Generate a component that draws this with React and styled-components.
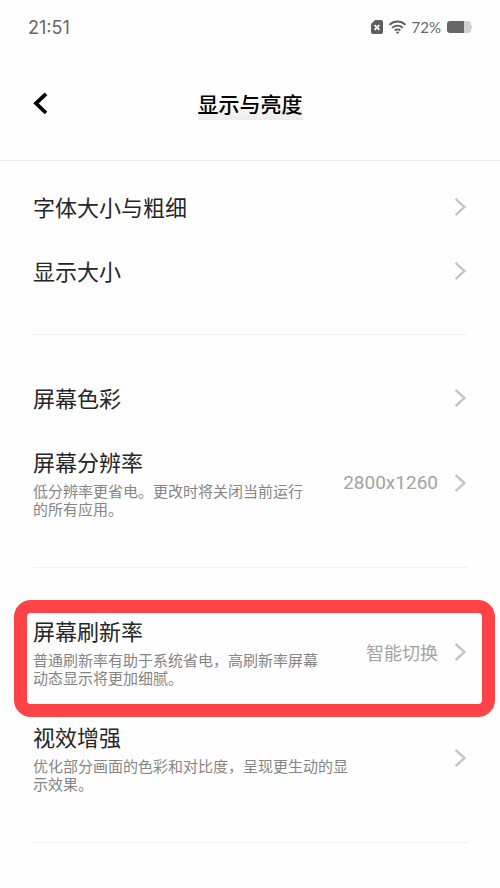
import React from 'react';
import styled, { createGlobalStyle } from 'styled-components';

const GlobalStyle = createGlobalStyle`
  * {
    box-sizing: border-box;
  }

  body {
    margin: 0;
    background: #fefefe;
    color: #262626;
    font-family: "Noto Sans CJK SC", sans-serif;
  }

  button {
    margin: 0;
    border: 0;
    padding: 0;
    background: none;
    color: inherit;
    font: inherit;
    text-align: left;
    cursor: pointer;
  }
`;

const StatusBar = styled.div`
  display: flex;
  align-items: center;
  justify-content: space-between;
  height: 54px;
  padding: 0 28px;
  color: #666;
  font-family: Inter, sans-serif;
`;

const Clock = styled.time`
  font-size: 18px;
`;

const StatusIcons = styled.div`
  display: flex;
  align-items: center;
  gap: 6px;

  svg {
    display: block;
  }
`;

const BatteryLevel = styled.span`
  font-family: Lato, sans-serif;
  font-size: 15px;
`;

const Header = styled.header`
  display: grid;
  grid-template-columns: 1fr auto 1fr;
  align-items: center;
  padding: 34px 33px 40px;
  border-bottom: 1px solid #ededed;
`;

const BackButton = styled.button`
  display: flex;
  align-items: center;
  width: 32px;
  height: 32px;
`;

const Title = styled.h1`
  margin: 0;
  padding-bottom: 2px;
  background: linear-gradient(#fefefe 30%, #ececec);
  color: #000;
  font-size: 21px;
  font-weight: 500;
  line-height: 30px;
`;

const Content = styled.main`
  padding: 0 33px;
`;

const Group = styled.section`
  padding: 32px 0 30px;
  border-bottom: 1px solid #f1f1f1;

  &:first-child {
    padding-top: 15px;
  }
`;

const Row = styled.button`
  position: relative;
  display: flex;
  align-items: center;
  width: 100%;
  padding: 15px 0 17px;

  svg {
    flex: none;
    margin-left: 15px;
  }
`;

const RowText = styled.span`
  flex: 1;
  padding-bottom: 2px;
`;

const RowTitle = styled.span`
  display: block;
  font-size: 22px;
  line-height: 30px;
`;

const RowDescription = styled.span`
  display: block;
  max-width: 324px;
  margin-top: 6px;
  color: #858585;
  font-size: 15px;
  line-height: 18px;
`;

const RowValue = styled.span`
  margin-left: 36px;
  color: #a3a3a3;
  font-family: ${({ $numeric }) => ($numeric ? 'Roboto, sans-serif' : 'inherit')};
  font-size: ${({ $numeric }) => ($numeric ? '19px' : '18px')};
  line-height: 24px;
`;

// red frame lying over the row and the page margins
const Highlight = styled.span`
  position: absolute;
  top: 0;
  right: -28px;
  bottom: -11px;
  left: -19px;
  border: 13px solid #fd4345;
  border-radius: 17px;
  pointer-events: none;
`;

const groups = [
  [{ title: '字体大小与粗细' }, { title: '显示大小' }],
  [
    { title: '屏幕色彩' },
    {
      title: '屏幕分辨率',
      description: '低分辨率更省电。更改时将关闭当前运行的所有应用。',
      value: '2800x1260',
      numeric: true,
    },
  ],
  [
    {
      title: '屏幕刷新率',
      description: '普通刷新率有助于系统省电，高刷新率屏幕动态显示将更加细腻。',
      value: '智能切换',
      highlighted: true,
    },
    {
      title: '视效增强',
      description: '优化部分画面的色彩和对比度，呈现更生动的显示效果。',
    },
  ],
];

function SimIcon() {
  return (
    <svg width="12" height="14" viewBox="0 0 12 14" aria-hidden="true">
      <path d="M4 0h6a2 2 0 0 1 2 2v10a2 2 0 0 1-2 2H2a2 2 0 0 1-2-2V4z" fill="#5f5f5f" />
      <path d="M3.6 5.1l4.8 4.8M8.4 5.1L3.6 9.9" stroke="#fff" strokeWidth="1.7" />
    </svg>
  );
}

function WifiIcon() {
  return (
    <svg width="17" height="14" viewBox="0 0 17 14" aria-hidden="true">
      <g fill="none" stroke="#5f5f5f" strokeWidth="1.9">
        <path d="M0.6 4.8a11.2 11.2 0 0 1 15.8 0" />
        <path d="M3.2 7.8a7.5 7.5 0 0 1 10.6 0" />
        <path d="M5.7 10.5a4 4 0 0 1 5.6 0" />
      </g>
      <path d="M8.5 14l-1.7-1.8a2.5 2.5 0 0 1 3.4 0z" fill="#5f5f5f" />
    </svg>
  );
}

function BatteryIcon() {
  return (
    <svg width="25" height="12" viewBox="0 0 25 12" aria-hidden="true">
      <path d="M17 0h4a3 3 0 0 1 3 3v.8c1.3.8 1.3 3.6 0 4.4V9a3 3 0 0 1-3 3h-4z" fill="#cfcfcf" />
      <path d="M3 0h14v12H3a3 3 0 0 1-3-3V3a3 3 0 0 1 3-3z" fill="#666" />
    </svg>
  );
}

function BackIcon() {
  return (
    <svg width="15" height="24" viewBox="0 0 15 24" aria-hidden="true">
      <path d="M13 1.8L3 11.3l10 9.7" fill="none" stroke="#000" strokeWidth="3.8" />
    </svg>
  );
}

function ChevronIcon() {
  return (
    <svg width="14" height="20" viewBox="0 0 14 20" aria-hidden="true">
      <path d="M2.6 1.8L11.4 10l-8.8 8.2" fill="none" stroke="#c6c6c6" strokeWidth="2.5" />
    </svg>
  );
}

export default function App() {
  return (
    <>
      <GlobalStyle />
      <StatusBar>
        <Clock>21:51</Clock>
        <StatusIcons>
          <SimIcon />
          <WifiIcon />
          <BatteryLevel>72%</BatteryLevel>
          <BatteryIcon />
        </StatusIcons>
      </StatusBar>

      <Header>
        <BackButton type="button" aria-label="返回">
          <BackIcon />
        </BackButton>
        <Title>显示与亮度</Title>
      </Header>

      <Content>
        {groups.map((rows) => (
          <Group key={rows[0].title}>
            {rows.map((row) => (
              <Row key={row.title} type="button">
                <RowText>
                  <RowTitle>{row.title}</RowTitle>
                  {row.description && <RowDescription>{row.description}</RowDescription>}
                </RowText>
                {row.value && <RowValue $numeric={row.numeric}>{row.value}</RowValue>}
                <ChevronIcon />
                {row.highlighted && <Highlight />}
              </Row>
            ))}
          </Group>
        ))}
      </Content>
    </>
  );
}
